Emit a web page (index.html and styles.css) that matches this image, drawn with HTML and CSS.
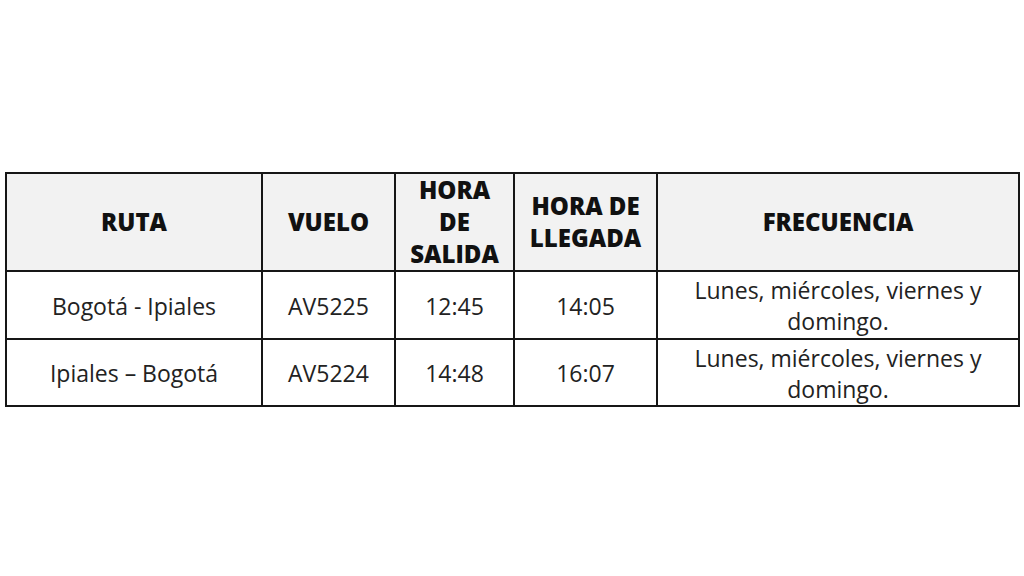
FILE: index.html
```html
<!DOCTYPE html>
<html lang="es">
<head>
<meta charset="utf-8">
<link rel="stylesheet" href="styles.css">
</head>
<body>
<main class="page">
  <table class="schedule">
    <colgroup>
      <col class="c-ruta">
      <col class="c-vuelo">
      <col class="c-salida">
      <col class="c-llegada">
      <col class="c-frec">
    </colgroup>
    <thead>
      <tr class="head-row">
        <th>RUTA</th>
        <th>VUELO</th>
        <th>HORA<br>DE<br>SALIDA</th>
        <th>HORA DE<br>LLEGADA</th>
        <th>FRECUENCIA</th>
      </tr>
    </thead>
    <tbody>
      <tr class="row-1">
        <td>Bogotá - Ipiales</td>
        <td>AV5225</td>
        <td>12:45</td>
        <td>14:05</td>
        <td class="frec">Lunes, miércoles, viernes y<br>domingo.</td>
      </tr>
      <tr class="row-2">
        <td>Ipiales – Bogotá</td>
        <td>AV5224</td>
        <td>14:48</td>
        <td>16:07</td>
        <td class="frec">Lunes, miércoles, viernes y<br>domingo.</td>
      </tr>
    </tbody>
  </table>
</main>
</body>
</html>
```
FILE: styles.css
```css
html, body {
  margin: 0;
  padding: 0;
  background: #ffffff;
}

.page {
  width: 1024px;
  height: 576px;
  box-sizing: border-box;
  padding: 172px 5px 0 5px;
}

.schedule {
  width: 1013px;
  border-collapse: collapse;
  table-layout: fixed;
  font-family: "Open Sans", "Liberation Sans", sans-serif;
  color: #222222;
}

.c-ruta { width: 256px; }
.c-vuelo { width: 133px; }
.c-salida { width: 119px; }
.c-llegada { width: 143px; }
.c-frec { width: 362px; }

.schedule th,
.schedule td {
  border: 2px solid #161616;
  text-align: center;
  vertical-align: middle;
  padding: 0;
  overflow: visible;
}

.schedule th {
  background: #f2f2f2;
  color: #111111;
  font-weight: 800;
  font-size: 24px;
  letter-spacing: 0;
  line-height: 32px;
}

.head-row { height: 97px; }
.row-1 { height: 68px; }
.row-2 { height: 67px; }

.schedule td {
  font-size: 23px;
  line-height: 31px;
  padding-top: 2px;
}
```
